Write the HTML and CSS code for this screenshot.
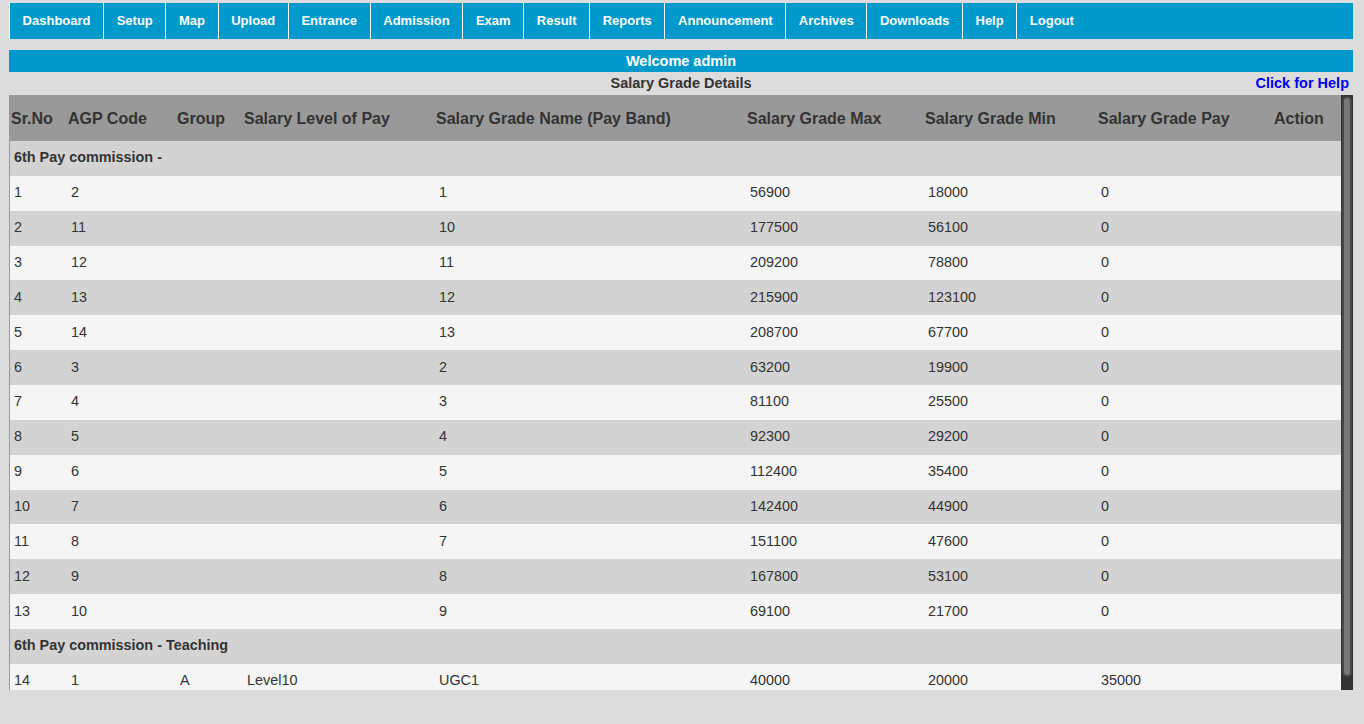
FILE: index.html
```html
<!DOCTYPE html>
<html>
<head>
<meta charset="utf-8">
<title>Salary Grade Details</title>
<link rel="stylesheet" href="styles.css">
</head>
<body>
<div class="page">
  <ul class="nav">
    <li><a href="#">Dashboard</a></li>
    <li><a href="#">Setup</a></li>
    <li><a href="#">Map</a></li>
    <li><a href="#">Upload</a></li>
    <li><a href="#">Entrance</a></li>
    <li><a href="#">Admission</a></li>
    <li><a href="#">Exam</a></li>
    <li><a href="#">Result</a></li>
    <li><a href="#">Reports</a></li>
    <li><a href="#">Announcement</a></li>
    <li><a href="#">Archives</a></li>
    <li><a href="#">Downloads</a></li>
    <li><a href="#">Help</a></li>
    <li><a href="#">Logout</a></li>
  </ul>
  <div class="welcome">Welcome admin</div>
  <div class="titlebar">
    <span></span>
    <span class="title">Salary Grade Details</span>
    <a class="help" href="#">Click for Help</a>
  </div>
  <div class="tablebox">
    <div class="viewport">
      <table class="grid">
        <colgroup>
          <col class="c1"><col class="c2"><col class="c3"><col class="c4"><col class="c5"><col class="c6"><col class="c7"><col class="c8"><col class="c9">
        </colgroup>
        <thead>
          <tr>
            <th>Sr.No</th><th>AGP Code</th><th>Group</th><th>Salary Level of Pay</th><th>Salary Grade Name (Pay Band)</th><th>Salary Grade Max</th><th>Salary Grade Min</th><th>Salary Grade Pay</th><th>Action</th>
          </tr>
        </thead>
        <tbody>
          <tr class="group"><td colspan="9">6th Pay commission -</td></tr>
          <tr><td>1</td><td>2</td><td></td><td></td><td>1</td><td>56900</td><td>18000</td><td>0</td><td></td></tr>
          <tr><td>2</td><td>11</td><td></td><td></td><td>10</td><td>177500</td><td>56100</td><td>0</td><td></td></tr>
          <tr><td>3</td><td>12</td><td></td><td></td><td>11</td><td>209200</td><td>78800</td><td>0</td><td></td></tr>
          <tr><td>4</td><td>13</td><td></td><td></td><td>12</td><td>215900</td><td>123100</td><td>0</td><td></td></tr>
          <tr><td>5</td><td>14</td><td></td><td></td><td>13</td><td>208700</td><td>67700</td><td>0</td><td></td></tr>
          <tr><td>6</td><td>3</td><td></td><td></td><td>2</td><td>63200</td><td>19900</td><td>0</td><td></td></tr>
          <tr><td>7</td><td>4</td><td></td><td></td><td>3</td><td>81100</td><td>25500</td><td>0</td><td></td></tr>
          <tr><td>8</td><td>5</td><td></td><td></td><td>4</td><td>92300</td><td>29200</td><td>0</td><td></td></tr>
          <tr><td>9</td><td>6</td><td></td><td></td><td>5</td><td>112400</td><td>35400</td><td>0</td><td></td></tr>
          <tr><td>10</td><td>7</td><td></td><td></td><td>6</td><td>142400</td><td>44900</td><td>0</td><td></td></tr>
          <tr><td>11</td><td>8</td><td></td><td></td><td>7</td><td>151100</td><td>47600</td><td>0</td><td></td></tr>
          <tr><td>12</td><td>9</td><td></td><td></td><td>8</td><td>167800</td><td>53100</td><td>0</td><td></td></tr>
          <tr><td>13</td><td>10</td><td></td><td></td><td>9</td><td>69100</td><td>21700</td><td>0</td><td></td></tr>
          <tr class="group"><td colspan="9">6th Pay commission - Teaching</td></tr>
          <tr><td>14</td><td>1</td><td>A</td><td>Level10</td><td>UGC1</td><td>40000</td><td>20000</td><td>35000</td><td></td></tr>
        </tbody>
      </table>
    </div>
    <div class="scrollbar"><div class="thumb"></div></div>
  </div>
</div>
</body>
</html>
```

FILE: styles.css
```css
html, body {
  margin: 0;
  padding: 0;
  background: #dcdcdc;
  font-family: "Liberation Sans", Arial, sans-serif;
  color: #333;
}

.page {
  margin: 3px 11px 0 9px;
}

.nav {
  display: flex;
  list-style: none;
  margin: 0;
  padding: 0;
  height: 36px;
  background: #0099cc;
  border-left: 1px solid #fff;
}

.nav li {
  border-right: 1px solid #fff;
}

.nav li:last-child {
  border-right: none;
}

.nav a {
  display: block;
  padding: 0 12.6px;
  line-height: 36px;
  color: #fff;
  font-size: 13px;
  font-weight: bold;
  text-decoration: none;
}

.welcome {
  margin-top: 11px;
  height: 22px;
  line-height: 22px;
  background: #0099cc;
  color: #fff;
  text-align: center;
  font-size: 14.5px;
  font-weight: bold;
}

.titlebar {
  display: grid;
  grid-template-columns: 1fr auto 1fr;
  height: 23px;
  line-height: 22px;
  align-items: start;
  font-size: 14.5px;
  font-weight: bold;
}

.titlebar .title {
  color: #333;
}

.titlebar .help {
  justify-self: end;
  padding-right: 4px;
  color: #0000ee;
  text-decoration: none;
}

.tablebox {
  display: flex;
  height: 595px;
  border-left: 1px solid #999;
}

.viewport {
  flex: 1;
  min-width: 0;
  overflow: hidden;
  background: #f5f5f5;
}

.scrollbar {
  width: 12px;
  box-sizing: border-box;
  padding: 1px 1px 13px 1px;
  background: #333;
}

.thumb {
  height: 100%;
  box-sizing: border-box;
  background: #777;
  border: 2px solid #474747;
  border-radius: 5px;
}

.grid {
  width: 100%;
  table-layout: fixed;
  border-collapse: collapse;
  border-spacing: 0;
}

.c1 { width: 57px; }
.c2 { width: 109px; }
.c3 { width: 67px; }
.c4 { width: 192px; }
.c5 { width: 311px; }
.c6 { width: 178px; }
.c7 { width: 173px; }
.c8 { width: 176px; }
.c9 { width: 68px; }

.grid thead tr {
  height: 46px;
  background: #999;
}

.grid th {
  padding: 2px 1px 0 1px;
  text-align: left;
  font-size: 16px;
  font-weight: bold;
  color: #333;
  white-space: nowrap;
}

.grid tbody tr {
  height: 34.86px;
}

.grid tbody tr:nth-child(odd) {
  background: #d3d3d3;
}

.grid tbody tr:nth-child(even) {
  background: #f5f5f5;
}

.grid td {
  padding: 0 4px 2px 4px;
  font-size: 14.4px;
  color: #333;
  white-space: nowrap;
}

.grid tr.group td {
  font-weight: bold;
}
```
